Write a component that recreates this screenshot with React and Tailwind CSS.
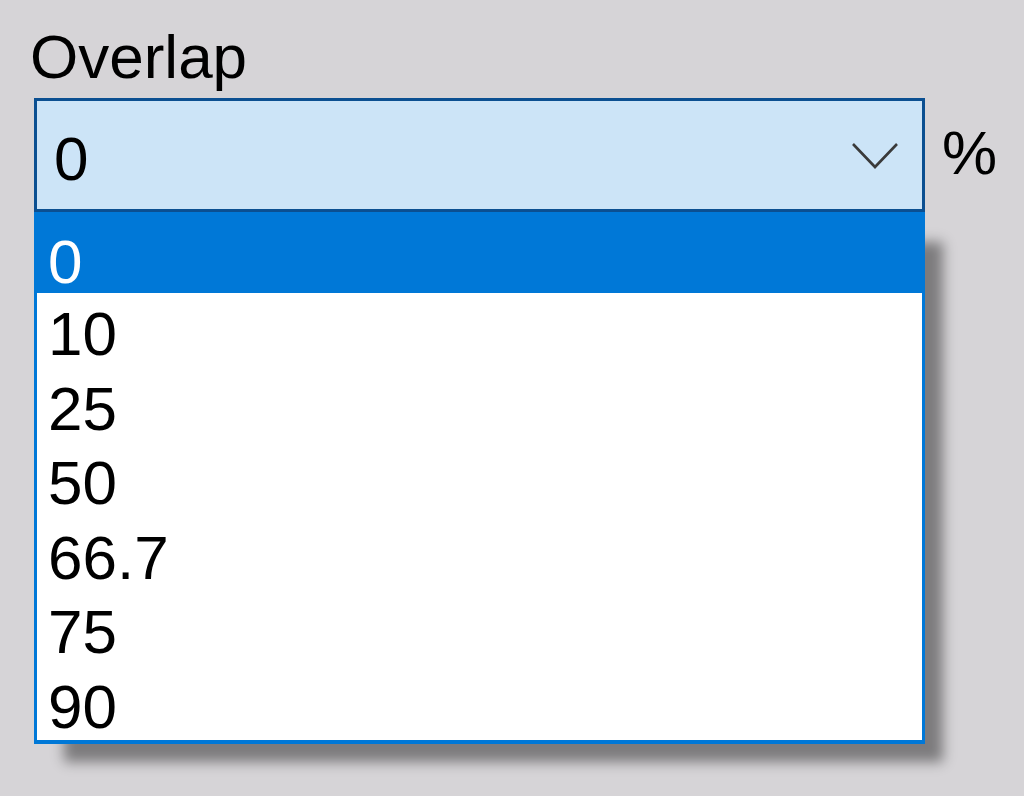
import React from "react";

const items = ["0", "10", "25", "50", "66.7", "75", "90"];

export default function App() {
  return (
    <div
      className="w-[1024px] h-[796px] overflow-hidden bg-[#d6d4d7] pl-[30px] pt-[26px] text-black"
      style={{ fontFamily: '"Liberation Sans", Arial, sans-serif' }}
    >
      <div className="text-[62px] leading-[62px]">Overlap</div>
      <div className="mt-[10px] ml-[4px] flex items-start">
        <div className="w-[891px]">
          <div className="h-[114px] border-[3px] border-[#0b4f91] bg-[#cce4f7] flex items-center justify-between">
            <div className="pl-[17px] pt-[8px] text-[62px] leading-[100px] h-[108px]">0</div>
            <svg width="48" height="28" viewBox="0 0 48 28" className="mr-[23px] mt-[1px]">
              <path d="M2 2 L24 25 L46 2" fill="none" stroke="#3a3a3a" strokeWidth="2.6" />
            </svg>
          </div>
          <div className="border-x-[3px] border-b-[4px] border-[#0078d7] bg-white shadow-[24px_24px_12px_-6px_rgba(0,0,0,0.42)]">
            {items.map((it, i) =>
              i === 0 ? (
                <div
                  key={it}
                  className="h-[81px] bg-[#0078d7] text-white pl-[11px] pt-[18px] text-[62px] leading-[63px]"
                >
                  {it}
                </div>
              ) : (
                <div
                  key={it}
                  className="h-[74.5px] pl-[11px] pt-[8px] text-[62px] leading-[66.5px]"
                >
                  {it}
                </div>
              )
            )}
          </div>
        </div>
        <div className="ml-[17px] text-[62px] leading-[110px]">%</div>
      </div>
    </div>
  );
}
